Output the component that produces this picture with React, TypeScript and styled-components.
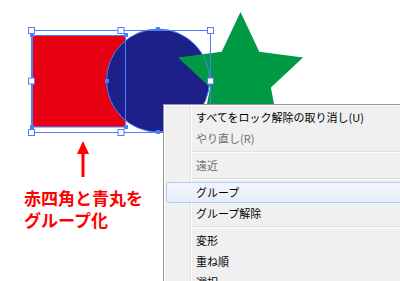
import styled, { createGlobalStyle } from 'styled-components'

const GlobalStyle = createGlobalStyle`
  html, body {
    margin: 0;
    padding: 0;
    background: #ffffff;
    overflow: hidden;
  }
  body {
    font-family: "Noto Sans CJK JP", "Noto Sans", sans-serif;
  }
`

const SEL = '#4f7dfb'

type MenuEntry =
  | { kind: 'item'; label: string; disabled?: boolean; hover?: boolean }
  | { kind: 'sep' }

const entries: MenuEntry[] = [
  { kind: 'item', label: 'すべてをロック解除の取り消し(U)' },
  { kind: 'item', label: 'やり直し(R)', disabled: true },
  { kind: 'sep' },
  { kind: 'item', label: '遠近', disabled: true },
  { kind: 'sep' },
  { kind: 'item', label: 'グループ', hover: true },
  { kind: 'item', label: 'グループ解除' },
  { kind: 'sep' },
  { kind: 'item', label: '変形' },
  { kind: 'item', label: '重ね順' },
  { kind: 'item', label: '選択' },
]

// group bounding box handles
const box = { x1: 31.5, y1: 30.5, x2: 210.5, y2: 132.5 }
const handles = [
  [box.x1, box.y1], [121, box.y1], [box.x2, box.y1],
  [box.x1, 81], [box.x2, 81],
  [box.x1, box.y2], [121, box.y2], [box.x2, box.y2],
]
const anchors = [
  [32, 35], [126, 35], [32, 127], [126, 127],
  [158, 29], [107, 81], [158, 132],
]

const star =
  '240.5,12 259.3,51.8 303,57.4 270.9,87.6 279.1,130.9 240.5,109.7 201.9,130.9 210.1,87.6 178,57.4 221.7,51.8'

export default function App() {
  return (
    <>
      <GlobalStyle />
      <Canvas>
        <Artwork width="400" height="281" viewBox="0 0 400 281">
          <rect x="32" y="35" width="94" height="92" fill="#e60012" />
          <circle cx="158" cy="80.5" r="51.5" fill="#1d2088" />
          <polygon points={star} fill="#009944" />
          <rect x="32.5" y="35.5" width="93" height="91.5" fill="none" stroke={SEL} strokeWidth="1" />
          <circle cx="158" cy="80.5" r="51.5" fill="none" stroke={SEL} strokeWidth="1" />
          <rect x={box.x1} y={box.y1} width={box.x2 - box.x1} height={box.y2 - box.y1} fill="none" stroke={SEL} strokeWidth="1" />
          {anchors.map(([x, y], i) => (
            <rect key={'a' + i} x={x - 2} y={y - 2} width="4" height="4" fill={SEL} />
          ))}
          {handles.map(([x, y], i) => (
            <rect key={'h' + i} x={x - 3} y={y - 3} width="6" height="6" fill="#fff" stroke={SEL} strokeWidth="1" />
          ))}
        </Artwork>

        <Callout>
          <svg width="14" height="38" viewBox="0 0 14 38">
            <polygon points="7,0 1,13 13,13" fill="#ff0000" />
            <rect x="5.5" y="12" width="3" height="24" fill="#ff0000" />
          </svg>
          <CalloutLine>赤四角と青丸を</CalloutLine>
          <CalloutLine>グループ化</CalloutLine>
        </Callout>

        <Menu>
          <Gutter />
          {entries.map((e, i) =>
            e.kind === 'sep' ? (
              <Separator key={i} />
            ) : (
              <Item key={i} $disabled={e.disabled} $hover={e.hover}>
                {e.label}
              </Item>
            )
          )}
        </Menu>
      </Canvas>
    </>
  )
}

const Canvas = styled.div`
  position: relative;
  width: 400px;
  height: 281px;
  overflow: hidden;
  background: #ffffff;
`

const Artwork = styled.svg`
  position: absolute;
  left: 0;
  top: 0;
  display: block;
`

const Callout = styled.div`
  position: absolute;
  left: 24px;
  top: 141px;
  display: flex;
  flex-direction: column;
  align-items: flex-start;
  svg {
    display: block;
    margin-left: 52px;
    margin-bottom: 8px;
  }
`

const CalloutLine = styled.div`
  height: 22px;
  color: #ff0000;
  font-family: "Noto Sans CJK JP", sans-serif;
  font-weight: 700;
  font-size: 17px;
  line-height: 22px;
  white-space: nowrap;
`

const Menu = styled.div`
  position: absolute;
  left: 163px;
  top: 104px;
  width: 260px;
  height: 200px;
  box-sizing: border-box;
  padding: 2px 2px;
  background: #f0f0f0;
  border: 1px solid #979797;
  box-shadow: inset 1px 1px 0 #ffffff;
  display: flex;
  flex-direction: column;
`

const Gutter = styled.div`
  position: absolute;
  left: 26px;
  top: 2px;
  bottom: 0;
  width: 1px;
  background: #e2e3e3;
  border-right: 1px solid #ffffff;
`

const Item = styled.div<{ $disabled?: boolean; $hover?: boolean }>`
  position: relative;
  flex: none;
  height: ${({ $hover }) => ($hover ? '19px' : '21px')};
  line-height: ${({ $hover }) => ($hover ? '19px' : '21px')};
  padding-left: 29px;
  font-size: 11px;
  white-space: nowrap;
  color: ${({ $disabled }) => ($disabled ? '#6d6d6d' : '#000000')};
  border: ${({ $hover }) => ($hover ? '1px solid #aecff7' : 'none')};
  border-radius: 3px;
  margin-left: ${({ $hover }) => ($hover ? '0' : '1px')};
  background: ${({ $hover }) =>
    $hover ? 'linear-gradient(#f2f6fc, #e6eefa)' : 'transparent'};
  z-index: 1;
`

const Separator = styled.div`
  flex: none;
  height: 6px;
  margin-left: 26px;
  display: flex;
  align-items: center;
  &::before {
    content: '';
    display: block;
    width: 100%;
    height: 1px;
    background: #e0e0e0;
    border-bottom: 1px solid #ffffff;
  }
`
